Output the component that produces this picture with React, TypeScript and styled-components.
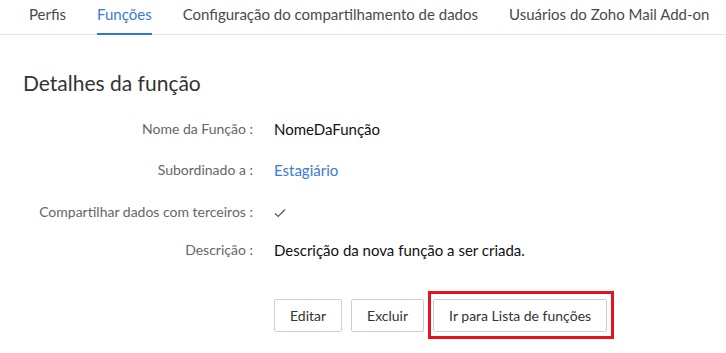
import React from "react";
import styled, { createGlobalStyle } from "styled-components";

const Global = createGlobalStyle`
  html, body { margin: 0; padding: 0; background: #fff; }
  body { font-family: Lato, "Open Sans", sans-serif; color: #222; }
`;

const Page = styled.div`
  width: 726px;
  height: 353px;
  overflow: hidden;
  background: #fff;
`;

const Tabs = styled.nav`
  display: flex;
  gap: 31px;
  padding-left: 29px;
  height: 34px;
  border-bottom: 1px solid #e3e3e3;
`;

const Tab = styled.div<{ $active?: boolean }>`
  font-size: 15px;
  color: ${(p) => (p.$active ? "#3a7bd5" : "#4a4a4a")};
  padding-top: 5px;
  box-sizing: border-box;
  height: 35px;
  white-space: nowrap;
  border-bottom: 2px solid ${(p) => (p.$active ? "#2c78d6" : "transparent")};
`;

const Heading = styled.h2`
  margin: 0;
  padding: 36px 0 0 23px;
  font-size: 21px;
  font-weight: 400;
  color: #333;
  line-height: 24px;
`;

const Details = styled.div`
  display: grid;
  grid-template-columns: 253px 1fr;
  column-gap: 21px;
  margin-top: 22px;
`;

const Label = styled.div<{ $h: number }>`
  text-align: right;
  font-size: 14px;
  color: #666;
  height: ${(p) => p.$h}px;
  line-height: 24px;
`;

const Value = styled.div<{ $h: number; $link?: boolean }>`
  font-size: 15px;
  color: ${(p) => (p.$link ? "#3a7bd5" : "#111")};
  height: ${(p) => p.$h}px;
  line-height: 24px;
`;

const Check = styled.svg`
  width: 12px;
  height: 10px;
  margin-top: 8px;
`;

const Actions = styled.div`
  display: flex;
  gap: 9px;
  padding-left: 274px;
  margin-top: 23px;
`;

const Button = styled.button`
  height: 33px;
  padding: 0 15px;
  background: #fff;
  border: 1px solid #cfcfcf;
  border-radius: 2px;
  font-family: Lato, "Open Sans", sans-serif;
  font-size: 14px;
  color: #333;
`;

const Highlighted = styled.div`
  position: relative;
`;

const RedBox = styled.div`
  position: absolute;
  top: -8px;
  bottom: -7px;
  left: -5px;
  right: -7px;
  border: 3px solid #e3141f;
  pointer-events: none;
`;

const rows: { label: string; value: React.ReactNode; h: number; link?: boolean }[] = [
  { label: "Nome da Função :", value: "NomeDaFunção", h: 41 },
  { label: "Subordinado a :", value: "Estagiário", h: 42, link: true },
  {
    label: "Compartilhar dados com terceiros :",
    value: (
      <Check viewBox="0 0 12 10">
        <path d="M1 5.5 L4.2 8.5 L11 1.5" fill="none" stroke="#555" strokeWidth="1.2" />
      </Check>
    ),
    h: 38,
  },
  { label: "Descrição :", value: "Descrição da nova função a ser criada.", h: 38 },
];

export default function App() {
  return (
    <Page>
      <Global />
      <Tabs>
        <Tab>Perfis</Tab>
        <Tab $active>Funções</Tab>
        <Tab>Configuração do compartilhamento de dados</Tab>
        <Tab>Usuários do Zoho Mail Add-on</Tab>
      </Tabs>
      <Heading>Detalhes da função</Heading>
      <Details>
        {rows.map((r) => (
          <React.Fragment key={r.label}>
            <Label $h={r.h}>{r.label}</Label>
            <Value $h={r.h} $link={r.link}>{r.value}</Value>
          </React.Fragment>
        ))}
      </Details>
      <Actions>
        <Button>Editar</Button>
        <Button>Excluir</Button>
        <Highlighted>
          <Button>Ir para Lista de funções</Button>
          <RedBox />
        </Highlighted>
      </Actions>
    </Page>
  );
}
